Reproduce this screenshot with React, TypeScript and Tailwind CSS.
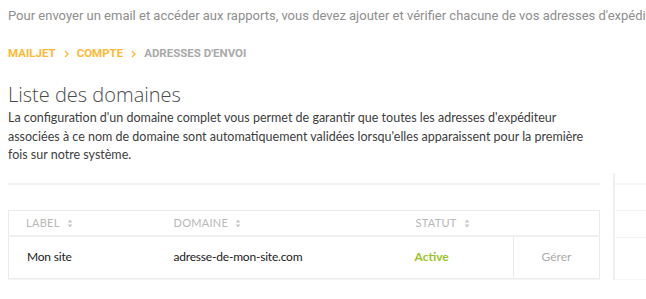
const crumbs = ["Mailjet", "Compte"];

function SortIcon() {
  return (
    <svg width="6" height="9" viewBox="0 0 6 9" className="ml-[7px] inline-block align-[-1px]">
      <path d="M3 0.5 L5.5 3.5 H0.5 Z" fill="#c8c8c8" />
      <path d="M3 8.5 L5.5 5.5 H0.5 Z" fill="#c8c8c8" />
    </svg>
  );
}

function Chevron() {
  return (
    <svg width="5" height="8" viewBox="0 0 5 8" className="mx-[8px]">
      <path d="M1 1 L4 4 L1 7" stroke="#fdb934" strokeWidth="1.4" fill="none" />
    </svg>
  );
}

export default function App() {
  return (
    <div className="w-[646px] h-[299px] overflow-hidden bg-white">
      <p className="pl-2 pt-[6px] whitespace-nowrap text-[13px] leading-[20px] text-[#8e8e8e] font-['Roboto',sans-serif]">
        Pour envoyer un email et accéder aux rapports, vous devez ajouter et vérifier chacune de vos adresses d'expéditio
      </p>

      <div className="flex items-center pl-2 mt-[21px] h-[14px] text-[11.5px] font-bold uppercase font-['Roboto',sans-serif]">
        {crumbs.map((c) => (
          <span key={c} className="flex items-center text-[#fdb934]">
            {c}
            <Chevron />
          </span>
        ))}
        <span className="text-[#a9a9a9]">Adresses d'envoi</span>
      </div>

      <div className="flex">
        <div className="w-[592px] ml-2">
          <h1 className="mt-[21px] text-[20px] leading-[26px] font-light text-[#4a4a4a] font-['Open_Sans',sans-serif]">
            Liste des domaines
          </h1>
          <p className="mt-[1px] text-[12.5px] leading-[18.5px] text-[#3d3d3d] font-['Lato',sans-serif]">
            La configuration d'un domaine complet vous permet de garantir que toutes les adresses d'expéditeur
            <br />
            associées à ce nom de domaine sont automatiquement validées lorsqu'elles apparaissent pour la première
            <br />
            fois sur notre système.
          </p>
          <div className="mt-[18px] h-[2px] bg-[#f0f0f0]" />

          <table className="mt-[25px] w-full border border-[#ebebeb] border-collapse font-['Lato',sans-serif] shadow-[0_1px_1px_rgba(0,0,0,0.04)]">
            <thead>
              <tr className="h-[26px] border-b-2 border-[#f0f0f0] text-left text-[11px] uppercase text-[#b8b8b8]">
                <th className="w-[148px] pl-[17px] font-normal tracking-wide">
                  Label
                  <SortIcon />
                </th>
                <th className="w-[240px] pl-[17px] font-normal tracking-wide">
                  Domaine
                  <SortIcon />
                </th>
                <th className="pl-[19px] font-normal tracking-wide">
                  Statut
                  <SortIcon />
                </th>
                <th className="w-[86px]" />
              </tr>
            </thead>
            <tbody>
              <tr className="h-[42px] text-[12px] tracking-[-0.2px] text-[#1a1a1a]">
                <td className="pl-[18px]">Mon site</td>
                <td className="pl-[17px]">adresse-de-mon-site.com</td>
                <td className="pl-[18px] text-[12px] tracking-normal font-bold text-[#9bc12a]">Active</td>
                <td className="border-l border-[#ebebeb] text-center tracking-normal text-[#ababab]">Gérer</td>
              </tr>
            </tbody>
          </table>
        </div>

        <div className="ml-[13px] mt-[112px] flex-1 border-l-2 border-[#efefef]">
          <div className="mt-[10px] h-[2px] bg-[#f4f4f4]" />
          <div className="mt-[25px] h-px bg-[#f4f4f4]" />
          <div className="mt-[26px] h-px bg-[#f4f4f4]" />
          <div className="mt-[41px] h-px bg-[#f4f4f4]" />
        </div>
      </div>
    </div>
  );
}
